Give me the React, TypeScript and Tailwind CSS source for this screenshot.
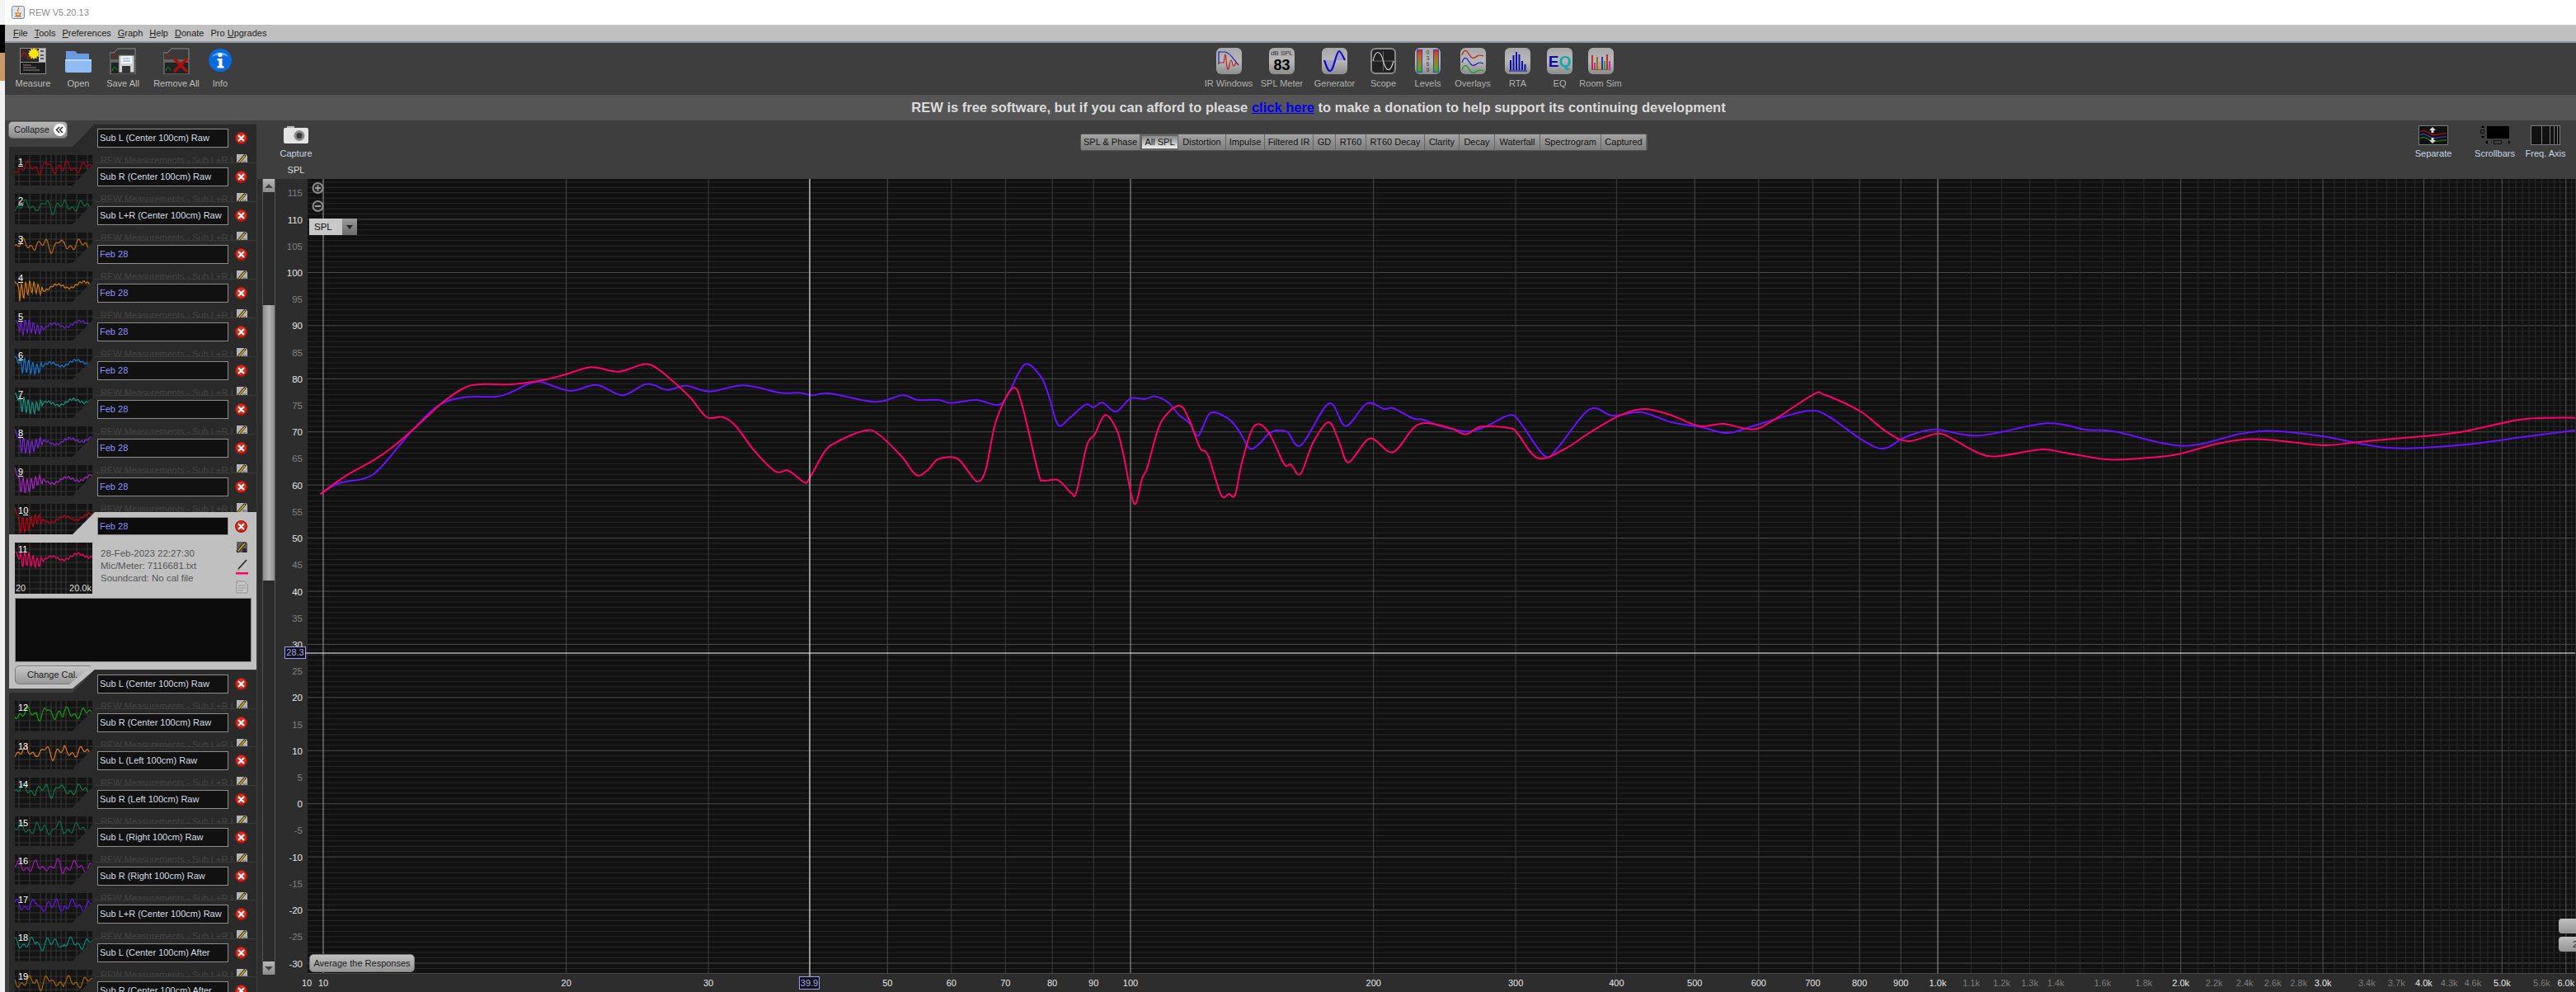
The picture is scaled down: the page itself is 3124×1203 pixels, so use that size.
import React from "react";

type Pt = [number, number];

const pinkA: Pt[] = [[15,598],[60,535],[120,470],[160,415],[210,330],[250,260],[290,210],[320,198],[380,198],[440,182],[480,163],[530,136],[582,152],[630,125],[655,140],[690,195],[720,250],[750,318],[780,317],[805,350],[840,440],[880,515],[905,512],[935,555],[945,540],[975,440],[1000,405],[1050,367],[1075,378],[1120,460],[1148,528],[1170,510],[1190,470],[1225,467],[1245,510],[1264,552],[1280,510],[1300,330],[1332,212],[1350,280],[1380,520],[1390,548],[1418,547]];
const pinkB: Pt[] = [[0,593],[10,590],[30,420],[45,380],[65,310],[88,370],[100,460],[120,633],[135,540],[145,500],[170,340],[205,276],[225,330],[245,430],[260,455],[285,600],[300,597],[312,600],[325,480],[348,350],[375,372],[405,488],[418,490],[436,525],[460,410],[490,336],[510,410],[528,482],[568,395],[612,445],[660,344],[720,357],[750,380],[780,352],[835,358],[850,380],[888,467],[940,432],[985,375],[1045,310],[1090,288],[1140,310],[1195,350],[1240,342],[1295,362],[1330,335]];
const pinkC: Pt[] = [[0,115],[20,115],[50,135],[100,180],[150,250],[195,285],[257,257],[290,280],[340,328],[380,340],[470,315],[520,328],[610,352],[690,345],[750,333],[830,295],[890,278],[950,282],[1050,300],[1110,290],[1200,275],[1320,255],[1450,208],[1520,200],[1568,200]];
const violetA: Pt[] = [[15,598],[50,558],[100,540],[130,500],[190,365],[240,275],[290,245],[350,243],[380,225],[410,197],[435,190],[490,222],[540,200],[590,238],[635,197],[675,218],[710,203],[755,224],[820,202],[890,229],[925,229],[950,238],[985,232],[1070,262],[1122,238],[1150,255],[1190,255],[1215,266],[1262,255],[1305,273],[1325,225],[1355,125],[1385,170],[1400,240],[1418,346],[1440,320],[1470,272],[1485,282],[1502,265],[1528,298],[1555,250]];
const violetB: Pt[] = [[140,252],[160,242],[185,265],[205,310],[225,340],[242,385],[265,302],[300,325],[320,370],[340,432],[360,410],[380,372],[410,370],[437,420],[490,268],[522,350],[562,268],[595,288],[612,285],[650,322],[670,327],[705,352],[755,370],[790,350],[835,310],[855,340],[900,458],[925,430],[985,290],[1030,312],[1085,300],[1140,335],[1200,355],[1250,375],[1310,342],[1400,295],[1440,315]];
const violetC: Pt[] = [[100,280],[145,312],[190,270],[250,242],[340,265],[480,220],[560,243],[620,250],[760,302],[880,258],[950,248],[1050,268],[1190,310],[1340,298],[1450,272],[1568,245]];

const fromA = (p: Pt): Pt => [380 + p[0] / 1.568, 400 + p[1] / 3];
const fromB = (p: Pt): Pt => [1300 + p[0] / 1.568, 400 + p[1] / 3];
const fromC = (p: Pt): Pt => [2200 + p[0] / 1.697, 440 + p[1] / 3];

const smooth = (pts: Pt[]) => {
    let d = `M${pts[0][0].toFixed(1)} ${pts[0][1].toFixed(1)}`;
    for (let i = 0; i < pts.length - 1; i++) {
        const p0 = pts[Math.max(i - 1, 0)];
        const p1 = pts[i];
        const p2 = pts[i + 1];
        const p3 = pts[Math.min(i + 2, pts.length - 1)];
        const c1x = p1[0] + (p2[0] - p0[0]) / 6;
        const c1y = p1[1] + (p2[1] - p0[1]) / 6;
        const c2x = p2[0] - (p3[0] - p1[0]) / 6;
        const c2y = p2[1] - (p3[1] - p1[1]) / 6;
        d += ` C${c1x.toFixed(1)} ${c1y.toFixed(1)} ${c2x.toFixed(1)} ${c2y.toFixed(1)} ${p2[0].toFixed(1)} ${p2[1].toFixed(1)}`;
    }
    return d;
};

const pinkPath = smooth([...pinkA.map(fromA), ...pinkB.map(fromB), ...pinkC.map(fromC)]);
const violetPath = smooth([...violetA.map(fromA), ...violetB.map(fromB), ...violetC.map(fromC)]);

const fx = (f: number) => 393 + 979 * Math.log10(f / 10);
const dy = (db: number) => 266 + (110 - db) * 6.443;

const range = (a: number, b: number, step = 1) => {
    const out: number[] = [];
    for (let v = a; v <= b; v += step) out.push(v);
    return out;
};

const xLabels: [number, string, boolean][] = [
    [10, "10", true], [20, "20", true], [30, "30", true], [50, "50", true], [60, "60", true], [70, "70", true], [80, "80", true], [90, "90", true], [100, "100", true],
    [200, "200", true], [300, "300", true], [400, "400", true], [500, "500", true], [600, "600", true], [700, "700", true], [800, "800", true], [900, "900", true],
    [1000, "1.0k", true], [1100, "1.1k", false], [1200, "1.2k", false], [1300, "1.3k", false], [1400, "1.4k", false], [1600, "1.6k", false], [1800, "1.8k", false],
    [2000, "2.0k", true], [2200, "2.2k", false], [2400, "2.4k", false], [2600, "2.6k", false], [2800, "2.8k", false], [3000, "3.0k", true], [3400, "3.4k", false], [3700, "3.7k", false],
    [4000, "4.0k", true], [4300, "4.3k", false], [4600, "4.6k", false], [5000, "5.0k", true], [5600, "5.6k", false], [6000, "6.0k", true],
];

const Chart = () => (
    <svg width="2789" height="986" viewBox="335 217 2789 986" className="block">
        <rect x="374" y="217" width="2750" height="963" fill="#111111" />
        {range(-32, 118).map((db) => (
            <line key={db} x1="374" x2="3124" y1={dy(db)} y2={dy(db)} stroke={db % 10 === 0 ? "#4c4c4c" : "#272727"} />
        ))}
        {range(1100, 6100, 100).map((f) => (
            <line key={f} x1={fx(f)} x2={fx(f)} y1="217" y2="1180" stroke={f % 1000 === 0 ? "#555555" : "#2b2b2b"} />
        ))}
        {[20, 50, 200, 500, 800, 900].map((f) => (
            <line key={f} x1={fx(f)} x2={fx(f)} y1="217" y2="1180" stroke="#4a4a4a" />
        ))}
        {[30, 40, 60, 70, 80, 90, 300, 400, 600, 700].map((f) => (
            <line key={f} x1={fx(f)} x2={fx(f)} y1="217" y2="1180" stroke="#3c3c3c" />
        ))}
        {[10, 100, 1000].map((f) => (
            <line key={f} x1={fx(f)} x2={fx(f)} y1="217" y2="1180" stroke="#a0a0a0" />
        ))}
        <line x1="374" x2="3124" y1="1180.5" y2="1180.5" stroke="#484848" />
        <path d={violetPath} fill="none" stroke="#6a0fff" strokeWidth="2" />
        <path d={pinkPath} fill="none" stroke="#ff0066" strokeWidth="2" />
        <line x1="372" x2="3124" y1="792" y2="792" stroke="#ffffff" />
        <line x1="983" x2="983" y1="217" y2="1184" stroke="#ffffff" />
        <circle cx="386.5" cy="228" r="6" fill="#222" stroke="#8c8c8c" strokeWidth="2" />
        <path d="M383 228h7M386.5 224.5v7" stroke="#9c9c9c" strokeWidth="2" />
        <circle cx="386.5" cy="250" r="6" fill="#222" stroke="#8c8c8c" strokeWidth="2" />
        <path d="M383 250h7" stroke="#9c9c9c" strokeWidth="2" />
        {range(-30, 115, 5).map((db) => (
            <text key={db} x="368" y={dy(db) + 4.5} textAnchor="end" fontSize="11.5" fill={db % 10 === 0 ? "#e6e6e6" : "#808080"}>
                {db}
            </text>
        ))}
        <text x="373" y="1196" textAnchor="middle" fontSize="11" fill="#e6e6e6">10</text>
        {xLabels.map(([f, label, strong]) => (
            <text key={label} x={fx(f)} y="1196" textAnchor="middle" fontSize="11" fill={strong ? "#e6e6e6" : "#7c7c7c"}>
                {label}
            </text>
        ))}
    </svg>
);

const thumbWave = (seed: number, feb: boolean) => {
    const pts: string[] = [];
    for (let i = 0; i <= 94; i += 1) {
        let y: number;
        if (feb) {
            const amp = i < 6 ? 2 : i < 34 ? 11 - (i - 6) * 0.22 : 1.2;
            y = (i < 6 ? 8 + i * 2 : 24 - i * 0.1) + amp * Math.sin(i * 1.25 + seed) + 3 * Math.sin(i * 0.2 + seed);
        } else {
            y = 15 + 4.5 * Math.sin(i * 0.27 + seed) + 3.5 * Math.sin(i * 0.66 + seed * 2) + (i > 25 && i < 60 ? 3 * Math.sin(i * 0.45) : 0);
        }
        pts.push(`${i},${y.toFixed(1)}`);
    }
    return pts.join(" ");
};

const Thumb = ({ num, under, color, seed, feb, labels }: { num: string; under?: boolean; color: string; seed: number; feb: boolean; labels?: boolean }) => (
    <div className="relative h-[62px] w-[94px] overflow-hidden bg-[#141414] text-[11px] text-white">
        <svg width="94" height="62" className="block">
            {[8, 16, 24, 32, 40, 48, 56].map((y) => (
                <line key={y} x1="0" x2="94" y1={y} y2={y} stroke="#303030" />
            ))}
            {[5, 18, 31, 38, 44, 50, 56, 62, 75, 88].map((x) => (
                <line key={x} x1={x} x2={x} y1="0" y2="62" stroke="#383838" />
            ))}
            <polyline points={thumbWave(seed, feb)} fill="none" stroke={color} strokeWidth="1.2" />
        </svg>
        <span className="absolute left-[4px] top-0 leading-[16px]">
            {under ? (
                <>
                    {num.slice(0, -1)}
                    <span className="underline">{num.slice(-1)}</span>
                </>
            ) : (
                num
            )}
        </span>
        {labels && (
            <>
                <span className="absolute bottom-0 left-[1px] leading-[14px] text-[#dddddd]">20</span>
                <span className="absolute bottom-0 right-[1px] leading-[14px] text-[#dddddd]">20.0k</span>
            </>
        )}
    </div>
);

const RedX = () => (
    <svg width="15" height="15" viewBox="0 0 15 15" className="shrink-0">
        <circle cx="7.5" cy="7.5" r="7.5" fill="#a8180f" />
        <circle cx="7.5" cy="7" r="6" fill="#d9301f" />
        <path d="M4.7 4.7l5.6 5.6M10.3 4.7l-5.6 5.6" stroke="#ffffff" strokeWidth="2.2" strokeLinecap="round" />
    </svg>
);

const PencilIcon = ({ light }: { light?: boolean }) => (
    <svg width="15" height="15" viewBox="0 0 15 15" className="shrink-0">
        <path d="M1 1h11l2 2v11H1z" fill={light ? "#5c5c5c" : "#b4b4b4"} />
        <rect x="8" y="9" width="5" height="5" fill={light ? "#2c2c2c" : "#8a8a8a"} />
        <path d="M1.5 13.5L11.5 2" stroke="#1a1a1a" strokeWidth="3" />
        <path d="M2.5 12.5L11 2.8" stroke="#e8b820" strokeWidth="1.4" />
    </svg>
);

const SubRow = ({ name, num, under, color, seed, feb, blue, mb }: { name: string; num: string; under?: boolean; color: string; seed: number; feb: boolean; blue?: boolean; mb: string }) => (
    <div className={`relative ml-[5px] flex h-[75px] w-[300px] border-t border-[#3a3a3a] bg-[#2a2a2a] [clip-path:polygon(104px_0,300px_0,300px_100%,0_100%,0_28px,77px_28px)] ${mb}`}>
        <div className="w-[107px] shrink-0 pl-[7px] pt-[37px]">
            <Thumb num={num} under={under} color={color} seed={seed} feb={feb} />
        </div>
        <div className="w-[193px] pt-[5px]">
            <div className="flex items-center">
                <div className={`flex h-[23px] w-[159px] items-center border border-[#8c8c8c] bg-[#111111] pl-[2px] text-[11px] ${blue ? "text-[#8f8fff]" : "text-[#d4dce4]"}`}>{name}</div>
                <div className="ml-[8px]">
                    <RedX />
                </div>
            </div>
            <div className="mt-[7px] flex items-start">
                <div className="w-[165px] overflow-hidden whitespace-nowrap pl-[4px] text-[11px] text-[#444444]">REW Measurements - Sub L+R In</div>
                <div className="ml-[3px]">
                    <PencilIcon />
                </div>
            </div>
        </div>
    </div>
);

const ExpandedRow = () => (
    <div className="relative z-0 ml-[5px] -mb-[23px] flex h-[214px] w-[300px] flex-col bg-[#c0c0c0] pt-[6px] [clip-path:polygon(104px_0,300px_0,300px_191px,104px_191px,77px_214px,0_214px,0_27px,77px_27px)]">
        <div className="flex items-center pl-[107px]">
            <div className="flex h-[22px] w-[159px] items-center border border-[#8c8c8c] bg-[#0c0c0c] pl-[2px] text-[11px] text-[#8f8fff]">Feb 28</div>
            <div className="ml-[8px]">
                <RedX />
            </div>
        </div>
        <div className="mt-[9px] flex pl-[7px]">
            <Thumb num="11" color="#ff0066" seed={2.2} feb labels />
            <div className="ml-[10px] w-[165px] pt-[6px] text-[11.5px] leading-[15px] text-[#555555]">
                <div>28-Feb-2023 22:27:30</div>
                <div>Mic/Meter: 7116681.txt</div>
                <div>Soundcard: No cal file</div>
            </div>
            <div className="-mt-[2px] ml-[-1px] flex flex-col gap-[7px]">
                <PencilIcon light />
                <svg width="15" height="19" viewBox="0 0 15 19">
                    <path d="M3 12L13 1" stroke="#222" strokeWidth="1.6" />
                    <path d="M1 15l2.5-3.5 1.5 1.3z" fill="#a08a50" />
                    <rect x="0" y="16" width="15" height="2.5" fill="#ff0066" />
                </svg>
                <svg width="15" height="16" viewBox="0 0 15 16">
                    <path d="M1 1h9l4 4v10H1z" fill="#c8c8c8" stroke="#909090" />
                    <path d="M3 6h9M3 9h9M3 12h6" stroke="#909090" />
                </svg>
            </div>
        </div>
        <div className="ml-[7px] mt-[5px] h-[78px] w-[287px] border border-[#888888] bg-[#0c0c0c]" />
        <div className="ml-[7px] mt-[4px] flex h-[23px] w-[94px] items-center rounded-[5px] border border-[#808080] bg-gradient-to-b from-[#c8c8c8] to-[#989898] pl-[14px] text-[11px] text-[#1c1c1c] [clip-path:polygon(0_0,100%_0,70%_100%,0_100%)]">
            Change Cal...
        </div>
    </div>
);

const firstRows: [string, string, string, number, boolean, boolean][] = [
    ["Sub L (Center 100cm) Raw", "1", "#b00010", 0.4, false, false],
    ["Sub R (Center 100cm) Raw", "2", "#0c6b3c", 1.3, false, false],
    ["Sub L+R (Center 100cm) Raw", "3", "#c06a10", 2.1, false, false],
    ["Feb 28", "4", "#d07a10", 0.8, true, true],
    ["Feb 28", "5", "#6a1fd0", 1.7, true, true],
    ["Feb 28", "6", "#1478d0", 2.6, true, true],
    ["Feb 28", "7", "#109a8a", 3.3, true, true],
    ["Feb 28", "8", "#7a22dd", 4.1, true, true],
    ["Feb 28", "9", "#aa20c8", 4.8, true, true],
    ["Feb 28", "10", "#c00010", 5.4, true, true],
];

const lastRows: [string, string, string, number][] = [
    ["Sub L (Center 100cm) Raw", "12", "#10a010", 0.4],
    ["Sub R (Center 100cm) Raw", "13", "#d87a10", 1.3],
    ["Sub L (Left 100cm) Raw", "14", "#0c7a48", 2.1],
    ["Sub R (Left 100cm) Raw", "15", "#0c6b48", 3.0],
    ["Sub L (Right 100cm) Raw", "16", "#aa10bb", 3.8],
    ["Sub R (Right 100cm) Raw", "17", "#6a10ee", 4.6],
    ["Sub L+R (Center 100cm) Raw", "18", "#008a7a", 5.2],
    ["Sub L (Center 100cm) After", "19", "#a86400", 6.0],
    ["Sub R (Center 100cm) After", "20", "#b08000", 0.9],
];

const ActionIcon = ({ children }: { children: React.ReactNode }) => (
    <svg width="32" height="32" viewBox="0 0 32 32">
        {children}
    </svg>
);

const MeterPanel = () => (
    <>
        <rect x="0" y="0" width="32" height="32" fill="#8c8c8c" />
        <rect x="1" y="1" width="22" height="16" fill="#2a2a2a" />
        <rect x="23" y="1" width="8" height="16" fill="#c4c4c4" />
        <path d="M2 12c2-8 4-8 6-3s4 6 7 2" fill="none" stroke="#c01010" strokeWidth="1.2" />
        <rect x="1" y="18" width="30" height="13" fill="#1c1c1c" />
        <path d="M4 21h10M4 24h16M4 27h20" stroke="#8a8a8a" />
        <path d="M25 4h4M25 9h4M25 13h4" stroke="#333" strokeWidth="1.5" />
    </>
);

const ActionItem = ({ w, label, children }: { w: string; label: string; children: React.ReactNode }) => (
    <div className={`flex flex-col items-center ${w}`}>
        <div className="flex h-[32px] items-center">{children}</div>
        <span className="mt-[4px] whitespace-nowrap text-[11px] leading-[14px] text-[#bcbcbc]">{label}</span>
    </div>
);

const TopActions = () => (
    <div className="flex pl-[4px]">
        <ActionItem w="w-[60px]" label="Measure">
            <ActionIcon>
                <MeterPanel />
                <g transform="translate(17 7) scale(0.72) translate(-17 -10)">
                    <path d="M17 0l2 3 3-2 0 4 4 0-2 3 3 2-3 2 2 3-4 0 0 4-3-2-2 3-2-3-3 2 0-4-4 0 2-3-3-2 3-2-2-3 4 0 0-4 3 2z" fill="#ffe414" />
                </g>
            </ActionIcon>
        </ActionItem>
        <ActionItem w="w-[50px]" label="Open">
            <ActionIcon>
                <path d="M1 4h11l3 3h14v8H1z" fill="#6a9ae0" />
                <path d="M0 14h32v14a2 2 0 0 1-2 2H2a2 2 0 0 1-2-2z" fill="#8fbcf2" />
                <path d="M0 14h32v2H0z" fill="#b8d8fa" />
            </ActionIcon>
        </ActionItem>
        <ActionItem w="w-[58px]" label="Save All">
            <ActionIcon>
                <path d="M0 6l5 0 5-5h21v14H0z" fill="#3a3a3a" stroke="#8c8c8c" />
                <rect x="1" y="17" width="30" height="15" fill="#222" stroke="#8c8c8c" />
                <path d="M3 12c2-6 3-6 5-2" fill="none" stroke="#c01010" />
                <path d="M3 28c2-6 3-6 6-1" fill="none" stroke="#10a010" />
                <rect x="11" y="9" width="19" height="21" fill="#d0d0d0" stroke="#555" />
                <rect x="14" y="10" width="13" height="9" fill="#f0f6ff" />
                <path d="M16 13h9M16 16h9" stroke="#7a9ac0" />
                <rect x="15" y="22" width="10" height="8" fill="#333" />
            </ActionIcon>
        </ActionItem>
        <ActionItem w="w-[72px]" label="Remove All">
            <ActionIcon>
                <path d="M0 6l5 0 5-5h21v14H0z" fill="#3a3a3a" stroke="#8c8c8c" />
                <rect x="1" y="17" width="30" height="15" fill="#222" stroke="#8c8c8c" />
                <path d="M3 12c2-6 3-6 5-2" fill="none" stroke="#c01010" />
                <path d="M3 28c2-6 3-6 6-1" fill="none" stroke="#10a010" />
                <path d="M13 13l16 16M29 13L13 29" stroke="#a81010" strokeWidth="3.6" />
            </ActionIcon>
        </ActionItem>
        <ActionItem w="w-[34px]" label="Info">
            <svg width="28" height="32" viewBox="0 0 28 32">
                <circle cx="14" cy="15" r="14" fill="#0a6ae0" />
                <path d="M4 11a11 9 0 0 1 20 0c-5-3-15-3-20 0z" fill="#6ab0f6" />
                <circle cx="14" cy="8.5" r="2.6" fill="#ffffff" />
                <path d="M10.5 13h6v9h2v2.5h-8V22h2v-6.5h-2z" fill="#ffffff" />
            </svg>
        </ActionItem>
    </div>
);

const ToolTile = ({ dark, children }: { dark?: boolean; children: React.ReactNode }) => (
    <div className={`flex h-[32px] w-[31px] items-center justify-center overflow-hidden rounded-[6px] ${dark ? "border-2 border-[#8a8a8a] bg-[#222222]" : "bg-gradient-to-b from-[#a8a8a8] via-[#b8b8b8] to-[#8c8c8c]"}`}>
        {children}
    </div>
);

const toolIcons: { label: string; w: string; dark?: boolean; icon: React.ReactNode }[] = [
    {
        label: "IR Windows",
        w: "w-[64px]",
        icon: (
            <svg width="31" height="32" viewBox="0 0 31 32">
                <path d="M3 20V5h8c6 1 10 9 16 16" fill="none" stroke="#1414c8" strokeWidth="1.2" />
                <path d="M3 18h6c1-3 1-10 2-10s1 16 3 18c2 1 2-11 4-11s1 7 3 7 2-4 3-4 2 2 3 2" fill="none" stroke="#c81414" strokeWidth="1.1" />
            </svg>
        ),
    },
    {
        label: "SPL Meter",
        w: "w-[65px]",
        icon: (
            <div className="flex flex-col items-center text-black">
                <span className="text-[8px] leading-[10px] text-[#333333]">dB SPL</span>
                <span className="text-[18px] font-bold leading-[18px]">83</span>
            </div>
        ),
    },
    {
        label: "Generator",
        w: "w-[63px]",
        icon: (
            <svg width="31" height="32" viewBox="0 0 31 32">
                <path d="M3 15c5 0 15 0 25 0-3-7-5-11-7-11-4 0-6 24-11 24-3 0-5-8-7-13z" fill="#8e8ed8" opacity="0.6" />
                <path d="M3 15c2 6 4 13 7 13 5 0 7-24 11-24 2 0 4 5 7 11" fill="none" stroke="#1010c0" strokeWidth="2.2" />
            </svg>
        ),
    },
    {
        label: "Scope",
        w: "w-[55px]",
        dark: true,
        icon: (
            <svg width="27" height="28" viewBox="0 0 27 28">
                <path d="M13.5 2v24M1 14h25" stroke="#666" />
                <path d="M1 14c3-14 9-14 12.5 0s9 14 12.5 0" fill="none" stroke="#d0d0d0" strokeWidth="1.2" />
            </svg>
        ),
    },
    {
        label: "Levels",
        w: "w-[53px]",
        icon: (
            <div className="flex h-[28px] w-[27px] justify-between">
                <div className="h-full w-[7px] border border-[#2a4ad0] bg-gradient-to-b from-[#e81010] via-[#a08010] to-[#10b010]" />
                <div className="flex flex-col items-center justify-between text-[6.5px] leading-[7px] text-[#333333]">
                    <span>0</span>
                    <span>3</span>
                    <span>6</span>
                    <span>9</span>
                </div>
                <div className="h-full w-[7px] border border-[#2a4ad0] bg-gradient-to-b from-[#e81010] via-[#a08010] to-[#10b010]" />
            </div>
        ),
    },
    {
        label: "Overlays",
        w: "w-[56px]",
        icon: (
            <svg width="31" height="32" viewBox="0 0 31 32">
                <path d="M2 9c2-7 5-7 8-2s5 7 9 4 6-2 9-1" fill="none" stroke="#c81414" strokeWidth="1.2" />
                <path d="M2 18c2-7 5-7 8-2s5 7 9 4 6-2 9-1" fill="none" stroke="#1414c8" strokeWidth="1.2" />
                <path d="M2 27c2-7 5-7 8-2s5 7 9 4 6-2 9-1" fill="none" stroke="#10a010" strokeWidth="1.2" />
            </svg>
        ),
    },
    {
        label: "RTA",
        w: "w-[53px]",
        icon: (
            <svg width="31" height="32" viewBox="0 0 31 32">
                <path d="M6 27V15h2v12zM9.5 27V9h2v18zM13 27V5h2v22zM16.5 27V8h2v19zM20 27V16h2v11zM23.5 27V20h2v7z" fill="#0c0cb0" />
                <path d="M5 28h22" stroke="#0c0cb0" />
            </svg>
        ),
    },
    {
        label: "EQ",
        w: "w-[49px]",
        icon: (
            <div className="flex items-center text-[19px] font-bold leading-none">
                <span className="text-[#0a0ab0]">E</span>
                <span className="text-[#10a8b0]">Q</span>
            </div>
        ),
    },
    {
        label: "Room Sim",
        w: "w-[50px]",
        icon: (
            <svg width="31" height="32" viewBox="0 0 31 32">
                <path d="M5 26V9" stroke="#c01010" strokeWidth="1.6" />
                <path d="M8 26V18" stroke="#c010c0" strokeWidth="1.6" />
                <path d="M11 26V11" stroke="#806010" strokeWidth="1.6" />
                <path d="M14 26V17" stroke="#d0a010" strokeWidth="1.6" />
                <path d="M17 26V11" stroke="#1010c0" strokeWidth="1.6" />
                <path d="M20 26V16" stroke="#10a010" strokeWidth="1.6" />
                <path d="M23 26V8" stroke="#c01010" strokeWidth="1.6" />
                <path d="M26 26V16" stroke="#c010c0" strokeWidth="1.6" />
                <path d="M4 26.5h23" stroke="#806040" />
            </svg>
        ),
    },
];

const tabs: [string, string][] = [
    ["SPL & Phase", "w-[72px]"],
    ["All SPL", "w-[46px]"],
    ["Distortion", "w-[58px]"],
    ["Impulse", "w-[47px]"],
    ["Filtered IR", "w-[59px]"],
    ["GD", "w-[27px]"],
    ["RT60", "w-[37px]"],
    ["RT60 Decay", "w-[71px]"],
    ["Clarity", "w-[42px]"],
    ["Decay", "w-[43px]"],
    ["Waterfall", "w-[55px]"],
    ["Spectrogram", "w-[74px]"],
    ["Captured", "w-[55px]"],
];

const HeaderItem = ({ label, w, ml, children }: { label: string; w: string; ml: string; children: React.ReactNode }) => (
    <div className={`flex shrink-0 flex-col items-center pt-[6px] ${w} ${ml}`}>
        <div className="flex h-[24px] items-center">{children}</div>
        <span className="mt-[3px] whitespace-nowrap text-[11px] leading-[14px] text-[#c8d4e4]">{label}</span>
    </div>
);

const Scrollbar = () => (
    <div className="ml-[6px] flex h-[965px] w-[16px] shrink-0 flex-col border-x border-[#555555] bg-[#2a2a2a]">
        <div className="flex h-[16px] shrink-0 items-center justify-center bg-gradient-to-b from-[#b8b8b8] to-[#8c8c8c]">
            <div className="h-0 w-0 border-x-[5px] border-b-[5px] border-x-transparent border-b-[#444444]" />
        </div>
        <div className="h-[137px] shrink-0" />
        <div className="h-[334px] shrink-0 bg-gradient-to-r from-[#8c8c8c] via-[#b4b4b4] to-[#8c8c8c]" />
        <div className="flex-1" />
        <div className="flex h-[16px] shrink-0 items-center justify-center bg-gradient-to-b from-[#b8b8b8] to-[#8c8c8c]">
            <div className="h-0 w-0 border-x-[5px] border-t-[5px] border-x-transparent border-t-[#444444]" />
        </div>
    </div>
);

const App = () => (
    <div className="flex h-[1203px] w-[3124px] overflow-hidden bg-[#f0f0f0] [font-family:'Liberation_Sans',Arial,sans-serif]">
        {/* sliver of the desktop left of the window */}
        <div className="flex w-[6px] shrink-0 flex-col">
            <div className="h-[30px] bg-[#f4f4f4]" />
            <div className="h-[34px] bg-black" />
            <div className="h-[34px] bg-[#c89a6a]" />
            <div className="flex-1 bg-[#f0f0f0]" />
        </div>

        <div className="flex min-w-0 flex-1 flex-col bg-[#3e3e3e]">
            <div className="flex h-[30px] shrink-0 items-center bg-white pl-[8px]">
                <svg width="16" height="16" viewBox="0 0 16 16">
                    <rect x="0.5" y="0.5" width="15" height="15" rx="2" fill="#dfe6ee" stroke="#6a8aa8" />
                    <path d="M8 2c2 2-2 3 0 5M5 9h6l-1 3H6zM4 13h8" fill="none" stroke="#d06a10" strokeWidth="1.2" />
                </svg>
                <span className="ml-[5px] text-[11px] text-[#8c8c8c]">REW V5.20.13</span>
            </div>
            <div className="flex h-[22px] shrink-0 items-center gap-[8px] border-b-2 border-[#8c90a0] bg-[#c0c0c0] pl-[10px] text-[11px] text-[#222222]">
                <span><span className="underline">F</span>ile</span>
                <span><span className="underline">T</span>ools</span>
                <span><span className="underline">P</span>references</span>
                <span><span className="underline">G</span>raph</span>
                <span><span className="underline">H</span>elp</span>
                <span><span className="underline">D</span>onate</span>
                <span>Pro <span className="underline">U</span>pgrades</span>
            </div>
            <div className="flex h-[63px] shrink-0 pt-[6px]">
                <TopActions />
                <div className="ml-[1174px] flex">
                    {toolIcons.map((t) => (
                        <div key={t.label} className={`flex flex-col items-center ${t.w}`}>
                            <ToolTile dark={t.dark}>{t.icon}</ToolTile>
                            <span className="mt-[4px] whitespace-nowrap text-[11px] leading-[14px] text-[#b0b0b0]">{t.label}</span>
                        </div>
                    ))}
                </div>
            </div>
            <div className="flex h-[31px] shrink-0 items-center justify-center bg-[#555555] pl-[68px] text-[16.5px] font-bold text-[#dcdcdc]">
                <span>
                    REW is free software, but if you can afford to please <span className="text-[#0000ee] underline">click here</span> to make a donation to help support its continuing development
                </span>
            </div>

            <div className="flex min-h-0 flex-1">
                {/* measurement list */}
                <div className="relative h-[1057px] w-[306px] shrink-0 overflow-hidden pt-[4px]">
                    {firstRows.map(([name, num, color, seed, feb, blue], i) => (
                        <SubRow key={num} name={name} num={num} under color={color} seed={seed} feb={feb} blue={blue} mb={i === 9 ? "-mb-[27px]" : "-mb-[28px]"} />
                    ))}
                    <ExpandedRow />
                    {lastRows.map(([name, num, color, seed]) => (
                        <SubRow key={num} name={name} num={num} color={color} seed={seed} feb={false} mb="-mb-[28.5px]" />
                    ))}
                    <div className="absolute left-[4px] top-[1px] flex h-[21px] w-[72px] items-center rounded-[5px] border border-[#6c6c6c] bg-gradient-to-b from-[#b8b8b8] to-[#8c8c8c] pl-[6px] text-[11px] text-[#1c1c1c]">
                        Collapse
                        <svg width="15" height="15" viewBox="0 0 15 15" className="ml-[5px]">
                            <circle cx="7.5" cy="7.5" r="7.5" fill="#ffffff" />
                            <path d="M7 4L3.5 7.5 7 11M11 4L7.5 7.5 11 11" fill="none" stroke="#222222" strokeWidth="1.4" />
                        </svg>
                    </div>
                </div>

                <div className="flex min-w-0 flex-1 flex-col overflow-hidden">
                    <div className="flex h-[71px] shrink-0 text-[#c8d4e4]">
                        <div className="ml-[28px] flex w-[38px] shrink-0 flex-col items-center pt-[7px]">
                            <svg width="30" height="21" viewBox="0 0 30 21">
                                <rect x="4" y="0" width="9" height="3" fill="#bdbdbd" />
                                <rect x="0" y="2" width="30" height="19" rx="2" fill="#e4e4e4" />
                                <circle cx="19" cy="11.5" r="6.5" fill="#8a8a8a" />
                                <circle cx="19" cy="11.5" r="3.5" fill="#3a3a3a" />
                            </svg>
                            <span className="mt-[5px] whitespace-nowrap text-[11px] leading-[14px]">Capture</span>
                            <span className="mt-[6px] whitespace-nowrap text-[11px] leading-[14px] text-[#dddddd]">SPL</span>
                        </div>
                        <div className="ml-[932px] mt-[16px] flex h-[21px] shrink-0 rounded-[2px] border border-[#555555] bg-gradient-to-b from-[#a4a4a4] to-[#7c7c7c] text-[11px] text-[#111111]">
                            {tabs.map(([label, w]) => (
                                <div key={label} className={`flex shrink-0 items-center justify-center whitespace-nowrap border-r border-[#666666] ${w} ${label === "All SPL" ? "border-2 border-[#333333] bg-gradient-to-b from-[#888888] to-[#f0f0f0]" : ""}`}>
                                    {label}
                                </div>
                            ))}
                        </div>
                        <HeaderItem label="Separate" w="w-[44px]" ml="ml-[931px]">
                            <svg width="36" height="24" viewBox="0 0 36 24">
                                <rect x="0.5" y="0.5" width="35" height="23" fill="#111" stroke="#7a7a7a" />
                                <path d="M2 8c5-4 9 1 14 3s10-2 18-1" fill="none" stroke="#a01010" strokeWidth="1.4" />
                                <path d="M2 12c5-4 9 1 14 3s10-2 18-1" fill="none" stroke="#3a3aa8" strokeWidth="1.4" />
                                <path d="M2 16c5-4 9 1 14 3s10-2 18-1" fill="none" stroke="#108010" strokeWidth="1.4" />
                                <path d="M17 2l-4 4h2.5v3h3V6H21zM17 22l-4-4h2.5v-3h3v3H21z" fill="#d8d8d8" />
                            </svg>
                        </HeaderItem>
                        <HeaderItem label="Scrollbars" w="w-[49px]" ml="ml-[28px]">
                            <svg width="36" height="24" viewBox="0 0 36 24">
                                <rect x="8" y="1" width="27" height="15" fill="#000" />
                                <path d="M3 0l2.5 3h-5zM3 16l2.5-3h-5z" fill="#000" />
                                <rect x="0.5" y="5.5" width="4" height="4" fill="none" stroke="#111" />
                                <path d="M9 18l-3 2.5 3 2.5zM34 18l3 2.5-3 2.5z" fill="#000" />
                                <rect x="16.5" y="18.5" width="9" height="4" fill="none" stroke="#111" />
                            </svg>
                        </HeaderItem>
                        <HeaderItem label="Freq. Axis" w="w-[50px]" ml="ml-[12px]">
                            <svg width="36" height="24" viewBox="0 0 36 24">
                                <rect x="0.5" y="0.5" width="35" height="23" fill="#111" stroke="#7a7a7a" />
                                <path d="M13.5 0v24M23.5 0v24M28.5 0v24M32.5 0v24" stroke="#7a7a7a" />
                            </svg>
                        </HeaderItem>
                        <div className="ml-[12px] mt-[6px] h-[24px] w-[12px] shrink-0 border border-[#7a7a7a] bg-[#111111]" />
                    </div>

                    <div className="flex min-h-0 flex-1 bg-[#2d2d2d]">
                        <Scrollbar />
                        <div className="relative flex-1">
                            <Chart />
                            <div className="absolute left-[41px] top-[48px] flex h-[20px] w-[58px] items-stretch bg-[#c8c8c8] text-[11.5px] text-[#111111]">
                                <span className="flex-1 pl-[6px] leading-[20px]">SPL</span>
                                <span className="flex w-[18px] items-center justify-center bg-gradient-to-b from-[#9a9a9a] to-[#6c6c6c]">
                                    <span className="h-0 w-0 border-x-[4px] border-t-[5px] border-x-transparent border-t-[#222222]" />
                                </span>
                            </div>
                            <div className="absolute left-[41px] top-[940px] flex h-[22px] w-[128px] items-center justify-center rounded-[5px] border border-[#777777] bg-gradient-to-b from-[#c0c0c0] to-[#949494] text-[11px] text-[#1a1a1a]">
                                Average the Responses
                            </div>
                            <div className="absolute left-[11px] top-[567px] flex h-[15px] w-[26px] items-center justify-center whitespace-nowrap border border-[#9a9aff] bg-[#111111] text-[11px] text-[#a8a8ff]">
                                28.3
                            </div>
                            <div className="absolute left-[635px] top-[967px] flex h-[16px] w-[25px] items-center justify-center border border-[#9a9aff] bg-[#111111] text-[11px] text-[#a8a8ff]">
                                39.9
                            </div>
                            <div className="absolute left-[2769px] top-[897px] h-[18px] w-[30px] rounded-[4px] bg-gradient-to-b from-[#c0c0c0] to-[#949494]" />
                            <div className="absolute left-[2769px] top-[919px] h-[18px] w-[30px] overflow-hidden whitespace-nowrap rounded-[4px] bg-gradient-to-b from-[#c0c0c0] to-[#949494] pl-[17px] text-[11px] leading-[18px] text-[#222222]">
                                2
                            </div>
                        </div>
                    </div>
                </div>
            </div>
        </div>
    </div>
);

export default App;
